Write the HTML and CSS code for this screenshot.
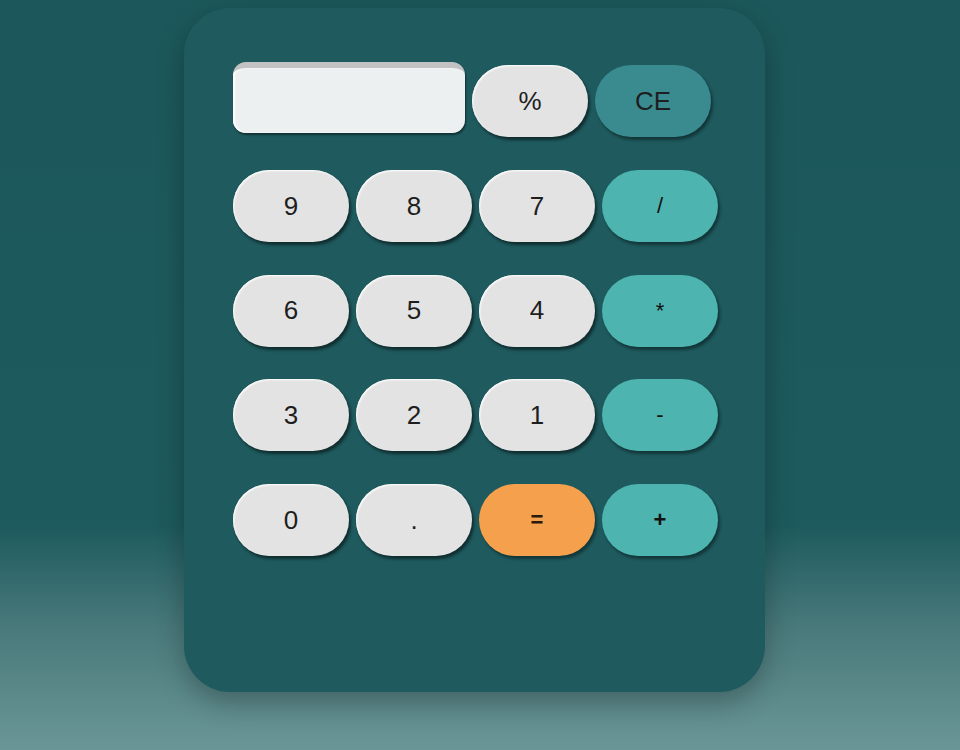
FILE: index.html
```html
<!DOCTYPE html>
<html>
<head>
<meta charset="utf-8">
<link rel="stylesheet" href="styles.css">
</head>
<body>
<div class="calc">
  <div class="top-row">
    <div class="display"></div>
    <button class="key">%</button>
    <button class="key key-ce">CE</button>
  </div>
  <div class="keys">
    <button class="key">9</button>
    <button class="key">8</button>
    <button class="key">7</button>
    <button class="key key-op">/</button>
    <button class="key">6</button>
    <button class="key">5</button>
    <button class="key">4</button>
    <button class="key key-op">*</button>
    <button class="key">3</button>
    <button class="key">2</button>
    <button class="key">1</button>
    <button class="key key-op">-</button>
    <button class="key">0</button>
    <button class="key">.</button>
    <button class="key key-eq">=</button>
    <button class="key key-op key-bold">+</button>
  </div>
</div>
</body>
</html>
```
FILE: styles.css
```css
html, body {
  margin: 0;
  height: 100%;
}
body {
  background: linear-gradient(to bottom, #1c585b 0%, #1d5a5d 70%, #4a7a7c 84%, #6a9696 100%);
  font-family: "Liberation Sans", Arial, sans-serif;
  overflow: hidden;
}
.calc {
  box-sizing: border-box;
  width: 581px;
  height: 684px;
  margin: 8px 0 0 184px;
  padding: 57px 47px 0 49px;
  background: #1e5a5e;
  border-radius: 46px;
  box-shadow: 0 10px 28px rgba(0, 0, 0, 0.28);
}
.top-row {
  display: flex;
  gap: 7px;
  height: 72px;
}
.display {
  box-sizing: border-box;
  width: 232px;
  height: 71px;
  margin-top: -3px;
  background: #ecf0f0;
  border-top: 6px solid #c2c2c2;
  border-radius: 13px;
  box-shadow: 1px 2px 2px rgba(0, 0, 0, 0.45), inset 2px 0 2px #ffffff;
}
.keys {
  display: grid;
  grid-template-columns: repeat(4, 116px);
  grid-auto-rows: 72px;
  column-gap: 7px;
  row-gap: 32.7px;
  margin-top: 33px;
}
.key {
  width: 116px;
  height: 72px;
  border: none;
  padding: 0;
  border-radius: 36px;
  background: #e3e3e3;
  color: #1e1e1e;
  font-family: "Liberation Sans", Arial, sans-serif;
  font-size: 26px;
  box-shadow: 2px 3px 3px rgba(0, 0, 0, 0.5), inset 1px 1px 2px #ffffff;
}
.key-ce {
  background: #3a8b90;
  box-shadow: 2px 3px 3px rgba(0, 0, 0, 0.4);
}
.key-op {
  background: #4db4af;
  font-size: 22px;
  color: #111;
  box-shadow: 2px 3px 3px rgba(0, 0, 0, 0.4);
}
.key-eq {
  background: #f5a04c;
  font-size: 22px;
  font-weight: bold;
  color: #2a1a0a;
  box-shadow: 2px 3px 3px rgba(0, 0, 0, 0.4);
}
.key-bold {
  font-weight: bold;
}
```
